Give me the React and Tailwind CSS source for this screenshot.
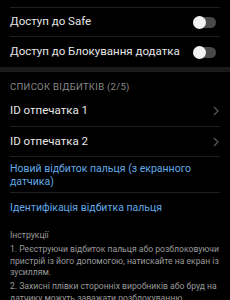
export default function App() {
  const Toggle = () => (
    <div className="relative w-[23px] h-[13px] flex items-center">
      <div className="w-[23px] h-[11px] rounded-full bg-[#4a4a4a]" />
      <div className="absolute left-0 top-0 w-[13px] h-[13px] rounded-full bg-[#f2f2f2]" />
    </div>
  );
  const Chevron = () => (
    <svg width="6" height="10" viewBox="0 0 6 10" className="mr-[1px]">
      <path d="M1 1 L5 5 L1 9" fill="none" stroke="#5a5a5a" strokeWidth="1.2" />
    </svg>
  );
  return (
    <div className="w-[230px] h-[300px] bg-black overflow-hidden text-[#e6e6e6]" style={{ fontFamily: "Roboto, 'Noto Sans', sans-serif" }}>
      <div className="h-[7px]" />
      <div className="mx-[10px] border-t border-[#1f1f1f]" />
      <div className="mx-[10px] h-[29px] flex items-center justify-between border-b border-[#1f1f1f]">
        <span className="text-[11.5px]">Доступ до Safe</span>
        <div className="mr-[4px]"><Toggle /></div>
      </div>
      <div className="mx-[10px] h-[30px] flex items-center justify-between">
        <span className="text-[11.5px]">Доступ до Блокування додатка</span>
        <div className="mr-[4px]"><Toggle /></div>
      </div>
      <div className="h-[5px] bg-[#1a1a1a]" />
      <div className="mx-[10px] h-[24px] pt-[6px] flex items-center">
        <span className="text-[9.5px] text-[#8a8a8a] tracking-[0.3px]">СПИСОК ВІДБИТКІВ (2/5)</span>
      </div>
      <div className="mx-[10px] h-[31px] flex items-center justify-between border-b border-[#1f1f1f]">
        <span className="text-[11.5px]">ID отпечатка 1</span>
        <Chevron />
      </div>
      <div className="mx-[10px] h-[30px] flex items-center justify-between border-b border-[#1f1f1f]">
        <span className="text-[11.5px]">ID отпечатка 2</span>
        <Chevron />
      </div>
      <div className="mx-[10px] pt-[5px] pb-[4px] border-b border-[#1f1f1f]">
        <div className="text-[10.5px] leading-[13px] text-[#62a9e6] w-[185px]">Новий відбиток пальця (з екранного датчика)</div>
      </div>
      <div className="mx-[10px] h-[30px] flex items-center">
        <span className="text-[10.5px] text-[#62a9e6]">Ідентифікація відбитка пальця</span>
      </div>
      <div className="mx-[10px] text-[8.6px] text-[#9a9a9a]">
        <div className="leading-[12px] mt-[6px]">Інструкції</div>
        <div className="leading-[11.5px] mt-[3px]">1. Реєструючи відбиток пальця або розблоковуючи пристрій із його допомогою, натискайте на екран із зусиллям.</div>
        <div className="leading-[11.5px] mt-[2.5px]">2. Захисні плівки сторонніх виробників або бруд на датчику можуть заважати розблокуванню.</div>
      </div>
    </div>
  );
}
